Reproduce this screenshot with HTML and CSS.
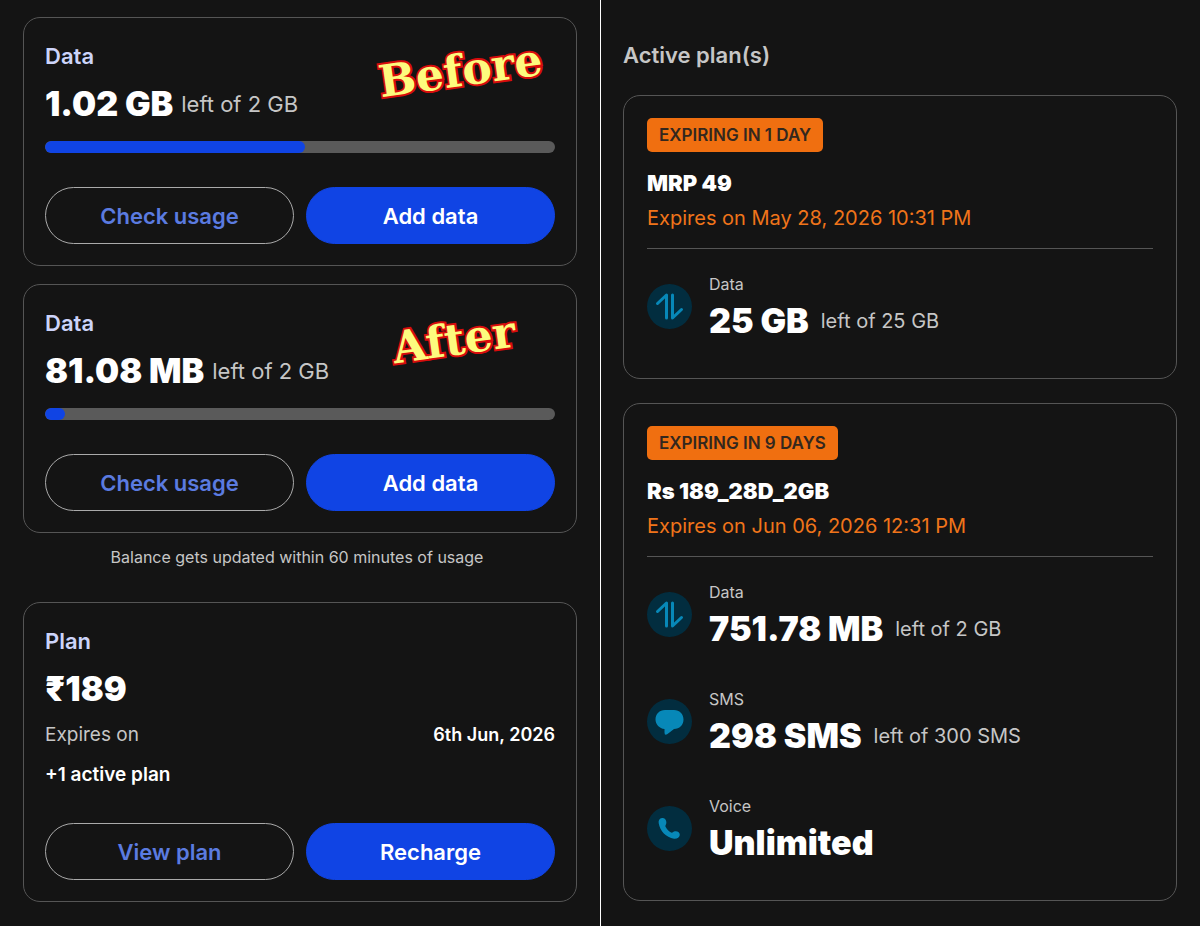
FILE: index.html
```
<!DOCTYPE html>
<html lang="en">
<head>
    <meta charset="UTF-8">
    <meta name="viewport" content="width=device-width, initial-scale=1.0">
    <title>Data balance</title>
    <link rel="stylesheet" href="styles.css">
</head>
<body>
    <!-- icons shared by the plan rows -->
    <svg class="sprite" aria-hidden="true">
        <symbol id="icon-data" viewBox="0 0 45 45">
            <path d="M10.500 19.500 L19.500 11 V34 M25.500 11 V34 L34.500 25.500" fill="none" stroke="currentColor" stroke-width="3" stroke-linecap="round" stroke-linejoin="round"/>
        </symbol>
        <symbol id="icon-sms" viewBox="0 0 45 45">
            <path d="M18 11H27C32.500 11 36.500 15 36.500 20.500C36.500 26 32.500 30 27 30L20.500 35Q17.500 37 17.500 33.500L17.500 30C12.500 29.500 8.500 25.500 8.500 20.500C8.500 15 12.500 11 18 11Z" fill="currentColor"/>
        </symbol>
        <symbol id="icon-voice" viewBox="0 0 45 45">
            <path d="M15 12C12.500 12.300 11.200 14.400 11.700 17.300C13 25 19 31.500 27 32.700C30 33 32.500 31.500 32.800 29C33 26.500 30.500 24.800 28 25.200C26 25.500 25.500 27.500 23.600 26.300C21.500 25 19.800 23.200 18.700 21C17.800 19.200 19.700 18.500 19.300 15.700C19 13.300 17.300 11.700 15 12Z" fill="currentColor"/>
        </symbol>
    </svg>

    <div class="page">
        <main class="column balance">
            <section class="card">
                <h2 class="card-title">Data</h2>
                <p class="amount"><strong>1.02 GB</strong> <span>left of 2 GB</span></p>
                <div class="bar"><div class="bar-fill" style="width: 51%"></div></div>
                <div class="buttons">
                    <button type="button" class="btn btn-outline">Check usage</button>
                    <button type="button" class="btn btn-primary">Add data</button>
                </div>
                <span class="stamp stamp-before">Before</span>
            </section>

            <section class="card">
                <h2 class="card-title">Data</h2>
                <p class="amount"><strong>81.08 MB</strong> <span>left of 2 GB</span></p>
                <div class="bar"><div class="bar-fill" style="width: 4%"></div></div>
                <div class="buttons">
                    <button type="button" class="btn btn-outline">Check usage</button>
                    <button type="button" class="btn btn-primary">Add data</button>
                </div>
                <span class="stamp stamp-after">After</span>
            </section>

            <p class="note">Balance gets updated within 60 minutes of usage</p>

            <section class="card">
                <h2 class="card-title">Plan</h2>
                <p class="amount"><strong>₹189</strong></p>
                <div class="plan-info">
                    <p class="plan-row"><span>Expires on</span> <b class="date">6th Jun, 2026</b></p>
                    <p class="plan-row"><b>+1 active plan</b></p>
                </div>
                <div class="buttons">
                    <button type="button" class="btn btn-outline">View plan</button>
                    <button type="button" class="btn btn-primary">Recharge</button>
                </div>
            </section>
        </main>

        <aside class="column plans">
            <h1 class="plans-title">Active plan(s)</h1>

            <section class="card plan-card">
                <span class="badge">EXPIRING IN 1 DAY</span>
                <h2 class="plan-name">MRP 49</h2>
                <p class="expiry">Expires on May 28, 2026 10:31 PM</p>
                <ul class="benefits">
                    <li class="benefit">
                        <svg class="icon" aria-hidden="true"><use href="#icon-data"/></svg>
                        <div>
                            <p class="label">Data</p>
                            <p class="value"><strong>25 GB</strong> <span>left of 25 GB</span></p>
                        </div>
                    </li>
                </ul>
            </section>

            <section class="card plan-card">
                <span class="badge">EXPIRING IN 9 DAYS</span>
                <h2 class="plan-name">Rs 189_28D_2GB</h2>
                <p class="expiry">Expires on Jun 06, 2026 12:31 PM</p>
                <ul class="benefits">
                    <li class="benefit">
                        <svg class="icon" aria-hidden="true"><use href="#icon-data"/></svg>
                        <div>
                            <p class="label">Data</p>
                            <p class="value"><strong>751.78 MB</strong> <span>left of 2 GB</span></p>
                        </div>
                    </li>
                    <li class="benefit">
                        <svg class="icon" aria-hidden="true"><use href="#icon-sms"/></svg>
                        <div>
                            <p class="label">SMS</p>
                            <p class="value"><strong>298 SMS</strong> <span>left of 300 SMS</span></p>
                        </div>
                    </li>
                    <li class="benefit">
                        <svg class="icon" aria-hidden="true"><use href="#icon-voice"/></svg>
                        <div>
                            <p class="label">Voice</p>
                            <p class="value"><strong>Unlimited</strong></p>
                        </div>
                    </li>
                </ul>
            </section>
        </aside>
    </div>
</body>
</html>
```
FILE: styles.css
```
* {
    box-sizing: border-box;
}

body {
    margin: 0;
    background-color: #141414;
    color: #c6c6c6;
    font-family: Inter, "Liberation Sans", sans-serif;
}

h1, h2, p, ul {
    margin: 0;
    padding: 0;
}

.sprite {
    display: none;
}

.page {
    display: flex;
    min-height: 100vh;
}

.column {
    flex: 1;
    min-width: 0;
    display: flex;
    flex-direction: column;
}

.balance {
    padding: 17px 23px 24px;
    gap: 18px;
    border-right: 1px solid #fff;
}

.plans {
    padding: 40px 23px 23px 22px;
    gap: 24px;
}

.card {
    position: relative;
    padding: 24px 21px 21px;
    border: 1px solid #555;
    border-radius: 17px;
}

/* Balance cards */
.card-title {
    color: #ccd4fa;
    font-size: 22px;
    font-weight: 600;
    line-height: 28px;
}

.amount {
    display: flex;
    align-items: center;
    gap: 8px;
    margin-top: 14px;
    font-size: 22px;
    line-height: 40px;
}

.amount strong {
    color: #fff;
    font-size: 34px;
    font-weight: 900;
}

.bar {
    height: 12px;
    margin-top: 17px;
    border-radius: 6px;
    background-color: #5a5a5a;
    overflow: hidden;
}

.bar-fill {
    height: 100%;
    border-radius: 6px;
    background-color: #1044e4;
}

.buttons {
    display: flex;
    gap: 12px;
    margin-top: 34px;
}

.btn {
    flex: 1;
    height: 57px;
    padding: 0;
    border: 1px solid #aaa;
    border-radius: 29px;
    font-family: inherit;
    font-size: 22px;
    font-weight: 600;
    cursor: pointer;
}

.btn-outline {
    background-color: transparent;
    color: #5b7be0;
}

.btn-primary {
    border-color: #1044e4;
    background-color: #1044e4;
    color: #fff;
}

.note {
    margin: -6px 0 15px;
    padding-right: 6px;
    font-size: 16px;
    line-height: 24px;
    text-align: center;
}

.plan-info {
    display: grid;
    gap: 12px;
    margin-top: 12px;
    font-size: 19px;
    line-height: 28px;
}

.plan-row {
    display: flex;
    justify-content: space-between;
}

.plan-row b {
    color: #fff;
    font-weight: 600;
}

.plan-row .date {
    font-size: 18px;
}

.stamp {
    position: absolute;
    color: #fdfb7e;
    font-family: "DejaVu Serif", serif;
    font-size: 44px;
    font-weight: bold;
    line-height: 54px;
    -webkit-text-stroke: 4px #d80c0c;
    paint-order: stroke fill;
    transform: rotate(-8deg);
}

.stamp-before {
    top: 26px;
    right: 33px;
}

.stamp-after {
    top: 28px;
    right: 60px;
}

/* Active plans */
.plans-title {
    font-size: 22px;
    font-weight: 600;
    line-height: 31px;
}

.plan-card {
    padding: 22px 23px 37px;
}

.badge {
    display: inline-block;
    padding: 0 12px;
    border-radius: 5px;
    background-color: #f06f10;
    color: #33271e;
    font-size: 17px;
    font-weight: 600;
    line-height: 34px;
    vertical-align: top;
}

.plan-name {
    margin-top: 16px;
    color: #fff;
    font-size: 22px;
    font-weight: 900;
    line-height: 30px;
}

.expiry {
    margin-top: 6px;
    padding-bottom: 16px;
    border-bottom: 1px solid #555;
    color: #f0741a;
    font-size: 20px;
    line-height: 28px;
}

.benefits {
    display: grid;
    gap: 38px;
    padding-top: 23px;
    list-style: none;
}

.benefit {
    display: flex;
    align-items: center;
    gap: 17px;
}

.icon {
    width: 45px;
    height: 45px;
    border-radius: 50%;
    background-color: #022d3f;
    color: #0788b8;
}

.label {
    font-size: 16px;
    line-height: 24px;
}

.value {
    display: flex;
    align-items: center;
    gap: 12px;
    margin-top: 5px;
    font-size: 20px;
    line-height: 40px;
}

.value strong {
    color: #fff;
    font-size: 34px;
    font-weight: 900;
}
```
